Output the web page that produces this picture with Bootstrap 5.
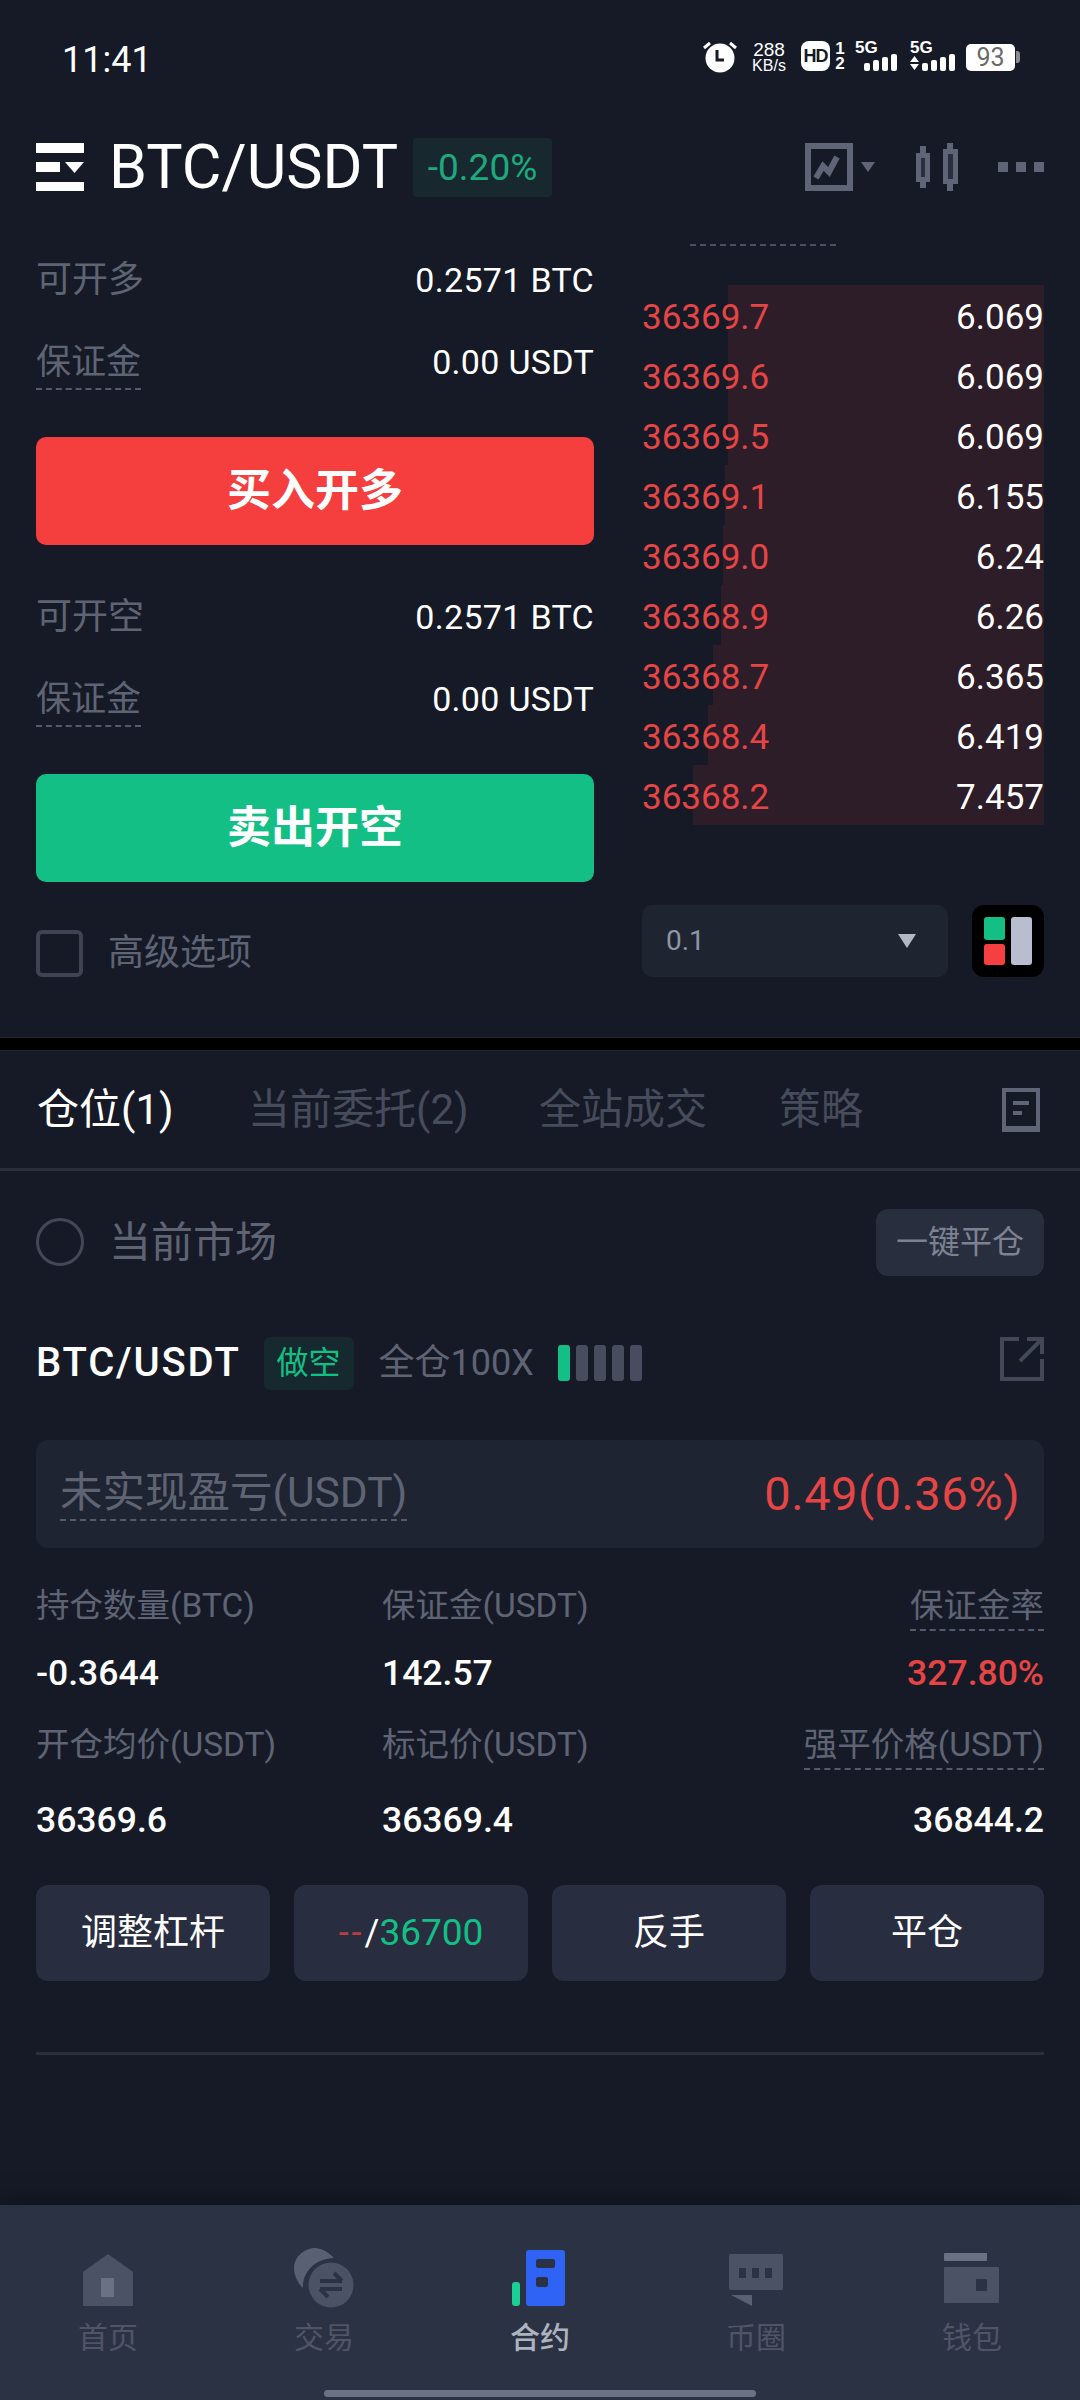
<!DOCTYPE html>
<html lang="zh">
<head>
  <meta charset="UTF-8">
  <title>BTC/USDT</title>
  <meta name="viewport" content="width=device-width, initial-scale=1">
  <link href="https://cdn.jsdelivr.net/npm/bootstrap@5.3.0/dist/css/bootstrap.min.css" rel="stylesheet">
  <style>
    body { width: 1080px; height: 2400px; overflow: hidden; background: #151a26; color: #fff; font-family: Roboto, "Noto Sans CJK SC", sans-serif; }
    .page { width: 1080px; height: 2400px; display: flex; flex-direction: column; }
    .muted { color: #5f6475; }
    .dash { border-bottom: 2px dashed #555b6b; }
    .red { color: #e64545; }
    .green { color: #14bf85; }

    .status-bar { height: 120px; padding: 0 60px 0 62px; }
    .clock { font-size: 36px; line-height: 1; }
    .status-icons { margin-bottom: 6px; }
    .speed { width: 36px; margin: 0 14px; font-size: 16px; line-height: 15px; text-align: center; font-family: "Liberation Sans", sans-serif; white-space: nowrap; display: flex; flex-direction: column; align-items: center; }
    .speed span { font-size: 19px; line-height: 17px; }
    .hd-box { width: 29px; height: 30px; background: #fff; color: #151a26; border-radius: 8px; font-size: 18px; font-weight: 900; line-height: 30px; text-align: center; font-family: "Liberation Sans", sans-serif; letter-spacing: -1px; }
    .sim { width: 10px; margin-left: 5px; font-size: 17px; font-weight: 700; line-height: 15px; text-align: center; font-family: "Liberation Sans", sans-serif; }
    .net { width: 44px; height: 30px; margin-left: 10px; }
    .net b { display: block; font-size: 17px; line-height: 13px; font-family: "Liberation Sans", sans-serif; }
    .net-b { width: 46px; margin-left: 11px; }
    .battery { width: 49px; height: 27px; margin: 3px 0 0 10px; background: #fff; border-radius: 5px; color: #6a6a6a; font-size: 25px; line-height: 27px; text-align: center; }
    .battery-nub { width: 4px; height: 12px; margin: 10px 0 0 1px; background: #8b8b8b; border-radius: 0 3px 3px 0; }

    .head-bar { height: 94px; padding: 0 36px; }
    .pair-title { margin: 0 0 0 25px; font-size: 61px; line-height: 1; font-weight: 400; }
    .change-tag { margin-left: 15px; width: 139px; height: 59px; background: #17292e; border-radius: 4px; color: #1fa97e; font-size: 37px; line-height: 59px; text-align: center; }

    .trade-area { height: 823px; padding: 0 36px; }
    .form-side { width: 558px; padding-top: 25px; }
    .form-row { height: 82px; font-size: 36px; }
    .form-row .form-label-txt { line-height: 50px; margin-bottom: 0; }
    .form-row .label-tip { font-size: 35px; margin-top: 4px; }
    .form-row .form-val { font-size: 34px; letter-spacing: .3px; }
    .trade-btn { display: block; width: 558px; height: 108px; border: 0; border-radius: 10px; color: #fff; font-size: 44px; font-weight: 700; margin-top: 34px; margin-bottom: 31px; padding: 0; }
    .trade-btn:hover { color: #fff; }
    .buy-btn, .buy-btn:hover { background: #f53e3e; }
    .sell-btn, .sell-btn:hover { background: #14bf85; }
    .check-box { width: 47px; height: 47px; border: 4px solid #3f4454; border-radius: 6px; }
    .adv-row { margin-top: 44px; gap: 25px; font-size: 36px; color: #5f6475; }

    .book-side { width: 402px; }
    .book-head { width: 146px; height: 32px; margin-left: 48px; border-bottom: 2px dashed #4c5161; }
    .book-list { margin-top: 39px; }
    .book-line { position: relative; height: 60px; font-size: 35px; line-height: 66px; }
    .depth-fill { position: absolute; top: 0; right: 0; bottom: 0; background: #2d1d28; }
    .book-line span { position: relative; }
    .step-select { width: 306px; height: 72px; background: #1e2430; border-radius: 10px; padding: 0 32px 0 24px; color: #8f95a5; font-size: 28px; }
    .tri-down { width: 0; height: 0; border-left: 9px solid transparent; border-right: 9px solid transparent; border-top: 14px solid #b4b8c4; }
    .book-foot { margin-top: 80px; }
    .layout-btn { width: 72px; height: 72px; background: #000; border-radius: 12px; }

    .split { height: 14px; background: #000; border-top: 1px solid #20242f; border-bottom: 1px solid #20242f; flex: none; }
    .tabs-bar { height: 120px; padding: 0 40px 0 37px; font-size: 42px; flex: none; border-bottom: 3px solid #2b2f3c; }
    .tabs-bar .on { color: #fff; }
    .tabs-bar .off { color: #474c5c; }
    .tab-a { width: 211px; }
    .tab-b { width: 291px; }
    .tab-c { width: 240px; }
    .market-row { height: 118px; padding: 0 36px; flex: none; margin-top: 12px; }
    .radio-ring { width: 48px; height: 48px; border: 3px solid #434858; border-radius: 50%; }
    .market-txt { margin-left: 25px; font-size: 42px; color: #5f6475; }
    .close-all { width: 168px; height: 67px; padding: 0; border: 0; border-radius: 12px; background: #282e3e; color: #7d8292; font-size: 32px; }
    .close-all:hover { background: #282e3e; color: #7d8292; }

    .pos-wrap { padding: 0 36px; }
    .pos-head { height: 106px; margin-top: 9px; }
    .pos-name { font-size: 40px; font-weight: 500; line-height: 1; letter-spacing: 1.800px; }
    .side-tag { margin-left: 23px; width: 90px; height: 53px; background: #16292e; border-radius: 6px; color: #14bf85; font-size: 32px; line-height: 53px; text-align: center; }
    .lever-txt { margin-left: 25px; font-size: 36px; color: #5f6475; }
    .lever-bars { margin-left: 24px; gap: 6px; }
    .lever-bars i { display: block; width: 12px; height: 36px; background: #474d5f; border-radius: 3px; }
    .lever-bars i.act { background: #14bf85; }
    .share-ico { margin-bottom: 8px; }
    .pnl-box { height: 108px; margin-top: 24px; padding: 0 24px; background: #1e2431; border-radius: 12px; }
    .pnl-label { font-size: 42.500px; line-height: 52px; color: #5f6475; }
    .pnl-val { font-size: 47px; letter-spacing: .5px; }
    .metric-grid { display: grid; grid-template-columns: 346px 1fr auto; grid-template-rows: 62px 77px 70px 70px; margin-top: 31px; }
    .metric-grid > .lab { font-size: 33.500px; line-height: 54px; color: #5f6475; }
    .metric-grid > .num { font-size: 35.500px; font-weight: 500; line-height: 64px; }
    .metric-grid .right-cell { text-align: right; }
    .lab .dash { display: inline-block; line-height: 46px; }
    .act-row { gap: 24px; margin-top: 27px; }
    .act-btn { flex: 1 1 0; height: 96px; padding: 0; border: 0; border-radius: 12px; background: #282e3f; color: #fff; font-size: 36px; }
    .act-btn:hover { background: #282e3f; color: #fff; }
    .act-btn .tp { letter-spacing: 3px; }
    .act-btn .green { font-size: 37px; }
    .end-line { height: 3px; margin-top: 71px; background: #2b2f3c; }

    .bottom-nav { position: relative; margin-top: auto; height: 195px; background: #2b3244; box-shadow: 0 -12px 20px rgba(0, 0, 0, .18); flex: none; padding-top: 41px; }
    .nav-cell { width: 216px; text-align: center; font-size: 30px; line-height: 40px; color: #4f5567; }
    .nav-cell svg { display: block; margin: 0 auto 8px; }
    .nav-cell.on { color: #aeb3c0; font-weight: 500; }
    .home-pill { position: absolute; left: 324px; bottom: 3px; width: 432px; height: 7px; background: #6b7285; border-radius: 4px; }
  </style>
</head>
<body>
<div class="page">

  <!-- status bar -->
  <div class="status-bar d-flex justify-content-between align-items-center flex-shrink-0">
    <div class="clock">11:41</div>
    <div class="status-icons d-flex align-items-start">
      <svg width="34" height="32" viewBox="0 0 34 32"><circle cx="17" cy="17" r="14.500" fill="#fff"/><path d="M14 9v10h7" fill="none" stroke="#151a26" stroke-width="3"/><path d="M1 7l6-5M33 7l-6-5" stroke="#fff" stroke-width="3"/></svg>
      <div class="speed"><span>288</span>KB/s</div>
      <div class="hd-box">HD</div>
      <div class="sim">1<br>2</div>
      <div class="net"><b>5G</b><svg class="d-block" width="44" height="18" viewBox="0 0 44 18"><g fill="#fff"><rect x="9" y="9" width="6" height="8" rx="2"/><rect x="18" y="6" width="6" height="11" rx="2"/><rect x="27" y="3" width="6" height="14" rx="2"/><rect x="36" y="0" width="6" height="17" rx="2"/></g></svg></div>
      <div class="net net-b"><b class="ms-0">5G</b><svg class="d-block" width="46" height="18" viewBox="0 0 46 18"><g fill="#fff"><path d="M0 8l4.500-6 4.500 6zM0 10l4.500 6 4.500-6z"/><rect x="12" y="9" width="6" height="8" rx="2"/><rect x="21" y="6" width="6" height="11" rx="2"/><rect x="30" y="3" width="6" height="14" rx="2"/><rect x="39" y="0" width="6" height="17" rx="2"/></g></svg></div>
      <div class="battery">93</div>
      <div class="battery-nub"></div>
    </div>
  </div>

  <!-- header -->
  <div class="head-bar d-flex align-items-center">
    <svg width="48" height="48" viewBox="0 0 48 48" fill="#fff"><rect width="48" height="10"/><rect y="19" width="24" height="10"/><path d="M29 19h19l-9.500 11z"/><rect y="39" width="48" height="9"/></svg>
    <h1 class="pair-title">BTC/USDT</h1>
    <div class="change-tag">-0.20%</div>
    <div class="ms-auto d-flex align-items-center">
      <svg width="48" height="48" viewBox="0 0 48 48"><path d="M3 3h42v42H3z" fill="none" stroke="#5f6577" stroke-width="6"/><path d="M11 35l7-12 6 6 8-15" fill="none" stroke="#5f6577" stroke-width="6"/></svg>
      <svg class="ms-2" width="14" height="10" viewBox="0 0 14 10"><path d="M0 0h14l-7 10z" fill="#5f6577"/></svg>
      <svg style="margin-left:41px" width="42" height="48" viewBox="0 0 42 48"><path d="M7 3v42M34 0v48" stroke="#5f6577" stroke-width="6"/><rect x="2.500" y="12.500" width="9" height="24" fill="#2a2f3f" stroke="#5f6577" stroke-width="5"/><rect x="29.500" y="8.500" width="10" height="30" fill="#2a2f3f" stroke="#5f6577" stroke-width="5"/></svg>
      <svg style="margin-left:40px" width="46" height="10" viewBox="0 0 46 10" fill="#5f6577"><rect width="10" height="10"/><rect x="18" width="10" height="10"/><rect x="36" width="10" height="10"/></svg>
    </div>
  </div>

  <!-- trade form and order book -->
  <div class="trade-area d-flex justify-content-between">
    <div class="form-side">
      <div class="form-row d-flex justify-content-between align-items-center">
        <span class="form-label-txt muted">可开多</span><span class="form-val">0.2571 BTC</span>
      </div>
      <div class="form-row d-flex justify-content-between align-items-center">
        <span class="form-label-txt label-tip muted dash">保证金</span><span class="form-val">0.00 USDT</span>
      </div>
      <button class="btn trade-btn buy-btn">买入开多</button>
      <div class="form-row d-flex justify-content-between align-items-center">
        <span class="form-label-txt muted">可开空</span><span class="form-val">0.2571 BTC</span>
      </div>
      <div class="form-row d-flex justify-content-between align-items-center">
        <span class="form-label-txt label-tip muted dash">保证金</span><span class="form-val">0.00 USDT</span>
      </div>
      <button class="btn trade-btn sell-btn mb-0">卖出开空</button>
      <div class="adv-row d-flex align-items-center">
        <div class="check-box"></div><span>高级选项</span>
      </div>
    </div>

    <div class="book-side">
      <div class="book-head"></div>
      <div class="book-list">
        <div class="book-line d-flex justify-content-between"><div class="depth-fill" style="width:316px"></div><span class="red">36369.7</span><span>6.069</span></div>
        <div class="book-line d-flex justify-content-between"><div class="depth-fill" style="width:316px"></div><span class="red">36369.6</span><span>6.069</span></div>
        <div class="book-line d-flex justify-content-between"><div class="depth-fill" style="width:316px"></div><span class="red">36369.5</span><span>6.069</span></div>
        <div class="book-line d-flex justify-content-between"><div class="depth-fill" style="width:319px"></div><span class="red">36369.1</span><span>6.155</span></div>
        <div class="book-line d-flex justify-content-between"><div class="depth-fill" style="width:321px"></div><span class="red">36369.0</span><span>6.24</span></div>
        <div class="book-line d-flex justify-content-between"><div class="depth-fill" style="width:323px"></div><span class="red">36368.9</span><span>6.26</span></div>
        <div class="book-line d-flex justify-content-between"><div class="depth-fill" style="width:331px"></div><span class="red">36368.7</span><span>6.365</span></div>
        <div class="book-line d-flex justify-content-between"><div class="depth-fill" style="width:336px"></div><span class="red">36368.4</span><span>6.419</span></div>
        <div class="book-line d-flex justify-content-between"><div class="depth-fill" style="width:351px"></div><span class="red">36368.2</span><span>7.457</span></div>
      </div>
      <div class="book-foot d-flex justify-content-between">
        <div class="step-select d-flex justify-content-between align-items-center"><span>0.1</span><span class="tri-down"></span></div>
        <div class="layout-btn d-flex justify-content-center align-items-center">
          <svg width="48" height="48" viewBox="0 0 48 48"><rect x="0" y="0" width="21" height="23" rx="3" fill="#14bf85"/><rect x="0" y="27" width="21" height="21" rx="3" fill="#f63f3f"/><rect x="27" y="0" width="21" height="48" rx="3" fill="#b9bdd0"/></svg>
        </div>
      </div>
    </div>
  </div>

  <div class="split"></div>

  <!-- tabs -->
  <div class="tabs-bar d-flex align-items-center">
    <span class="tab-a on">仓位(1)</span>
    <span class="tab-b off">当前委托(2)</span>
    <span class="tab-c off">全站成交</span>
    <span class="off">策略</span>
    <svg class="ms-auto" width="38" height="44" viewBox="0 0 38 44"><rect x="2" y="2" width="34" height="40" fill="none" stroke="#5f6577" stroke-width="4"/><rect y="38" width="38" height="6" fill="#5f6577"/><rect x="11" y="13" width="16" height="4" fill="#5f6577"/><rect x="11" y="23" width="9" height="4" fill="#5f6577"/></svg>
  </div>

  <div class="market-row d-flex align-items-center">
    <div class="radio-ring"></div>
    <span class="market-txt">当前市场</span>
    <button class="btn close-all ms-auto">一键平仓</button>
  </div>

  <!-- position -->
  <div class="pos-wrap">
    <div class="pos-head d-flex align-items-center">
      <span class="pos-name">BTC/USDT</span>
      <span class="side-tag">做空</span>
      <span class="lever-txt">全仓100X</span>
      <div class="lever-bars d-flex"><i class="act"></i><i></i><i></i><i></i><i></i></div>
      <svg class="share-ico ms-auto" width="44" height="44" viewBox="0 0 44 44" fill="none" stroke="#434858" stroke-width="4"><path d="M19 2H2v40h40V22"/><path d="M20 24L41 3M27 2h15v15"/></svg>
    </div>

    <div class="pnl-box d-flex justify-content-between align-items-center">
      <span class="pnl-label dash">未实现盈亏(USDT)</span>
      <span class="pnl-val red">0.49(0.36%)</span>
    </div>

    <div class="metric-grid">
      <div class="lab">持仓数量(BTC)</div>
      <div class="lab">保证金(USDT)</div>
      <div class="lab right-cell"><span class="dash">保证金率</span></div>
      <div class="num">-0.3644</div>
      <div class="num">142.57</div>
      <div class="num right-cell red">327.80%</div>
      <div class="lab">开仓均价(USDT)</div>
      <div class="lab">标记价(USDT)</div>
      <div class="lab right-cell"><span class="dash">强平价格(USDT)</span></div>
      <div class="num">36369.6</div>
      <div class="num">36369.4</div>
      <div class="num right-cell">36844.2</div>
    </div>

    <div class="act-row d-flex">
      <button class="btn act-btn">调整杠杆</button>
      <button class="btn act-btn"><span class="red opacity-75 tp">--</span>/<span class="green">36700</span></button>
      <button class="btn act-btn">反手</button>
      <button class="btn act-btn">平仓</button>
    </div>
    <div class="end-line"></div>
  </div>

  <!-- bottom nav -->
  <div class="bottom-nav d-flex">
    <div class="nav-cell">
      <svg width="100" height="64" viewBox="0 0 100 64"><path d="M25 60V26L50 8l25 18v34z" fill="#4c5266"/><rect x="43" y="32" width="13" height="19" fill="#6b7185"/></svg>
      首页
    </div>
    <div class="nav-cell">
      <svg width="100" height="64" viewBox="0 0 100 64"><path d="M60 12C52 4 46 2 39 2 28 4 20 12 20 22c0 8 4 15 9 20 -1-16 13-30 31-30z" fill="#596073"/><circle cx="57" cy="39" r="22.500" fill="#4c5266"/><path d="M46 35h22M60 27l8 8M68 43H46M54 51l-8-8" stroke="#2b3244" stroke-width="4" fill="none"/></svg>
      交易
    </div>
    <div class="nav-cell on">
      <svg width="100" height="64" viewBox="0 0 100 64"><rect x="36" y="4" width="39" height="56" rx="3" fill="#2f63f5"/><rect x="46" y="13" width="19" height="9" rx="2" fill="#2b3244"/><rect x="46" y="31" width="12" height="10" rx="2" fill="#2b3244"/><rect x="22" y="36" width="8" height="24" rx="3" fill="#1ccf94"/></svg>
      合约
    </div>
    <div class="nav-cell">
      <svg width="100" height="64" viewBox="0 0 100 64"><rect x="23" y="8" width="54" height="36" rx="2" fill="#4c5266"/><g fill="#2b3244"><rect x="33" y="22" width="7" height="10"/><rect x="46" y="22" width="7" height="10"/><rect x="59" y="22" width="7" height="10"/></g><path d="M25 49h21v11z" fill="#596073"/></svg>
      币圈
    </div>
    <div class="nav-cell">
      <svg width="100" height="64" viewBox="0 0 100 64"><rect x="22" y="7" width="43" height="8" rx="1" fill="#6b7185"/><rect x="22" y="21" width="55" height="36" rx="1" fill="#4c5266"/><rect x="54" y="33" width="11" height="12" rx="1" fill="#2b3244"/></svg>
      钱包
    </div>
    <div class="home-pill"></div>
  </div>
</div>
<script src="https://cdn.jsdelivr.net/npm/bootstrap@5.3.0/dist/js/bootstrap.bundle.min.js"></script>
</body>
</html>
